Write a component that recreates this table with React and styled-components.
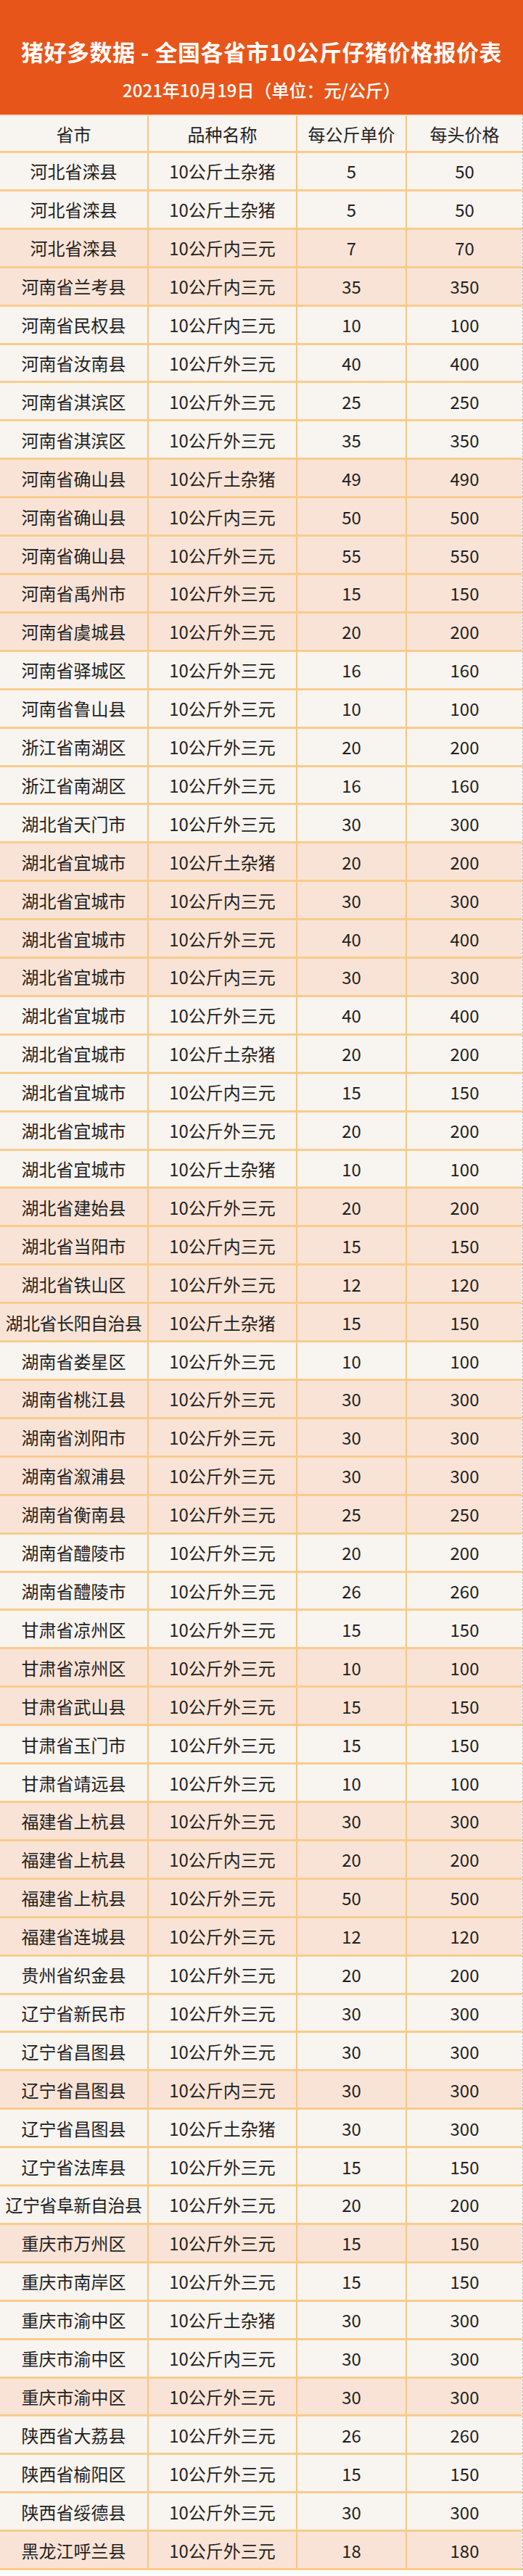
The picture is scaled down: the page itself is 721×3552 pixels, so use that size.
import React from 'react';
import styled, { createGlobalStyle } from 'styled-components';

const GlobalStyle = createGlobalStyle`
  html, body {
    margin: 0;
    padding: 0;
    background: #ffffff;
  }
  body {
    font-family: "Noto Sans CJK SC", "Noto Sans", sans-serif;
  }
`;

const Page = styled.div`
  width: 721px;
  padding-bottom: 7px;
`;

const Banner = styled.header`
  height: 158px;
  box-sizing: border-box;
  background-color: #e8551a;
  color: #ffffff;
  display: flex;
  flex-direction: column;
  align-items: center;
  padding-top: 51px;
  gap: 17px;
`;

const Title = styled.h1`
  margin: 0;
  font-size: 31px;
  line-height: 40px;
  font-weight: 700;
  letter-spacing: 0.5px;
  white-space: nowrap;
`;

const SubTitle = styled.div`
  font-size: 24px;
  line-height: 31px;
  font-weight: 500;
  white-space: nowrap;
`;

const Table = styled.div`
  border-right: 1px dashed #b9b4ae;
  border-top: 2px solid #f7dcc4;
`;

const Row = styled.div`
  display: grid;
  grid-template-columns: 205px 205px 151px 1fr;
  height: ${p => (p.$head ? '51px' : '52.92px')};
  box-sizing: border-box;
  border-bottom: 3px solid #f9cc8c;
  background-color: ${p => (p.$pink ? '#f9e3d6' : '#f8f4f0')};
`;

const Cell = styled.div`
  display: flex;
  align-items: center;
  justify-content: center;
  border-right: ${p => (p.$last ? 'none' : '2px solid #f6c683')};
  font-size: 24px;
  color: #1f1f1f;
  white-space: nowrap;
  letter-spacing: ${p => (p.$tight ? '-0.5px' : '0')};
`;

const rows = [
  ['河北省滦县', '10公斤土杂猪', 5, 0],
  ['河北省滦县', '10公斤土杂猪', 5, 0],
  ['河北省滦县', '10公斤内三元', 7, 1],
  ['河南省兰考县', '10公斤内三元', 35, 1],
  ['河南省民权县', '10公斤内三元', 10, 0],
  ['河南省汝南县', '10公斤外三元', 40, 0],
  ['河南省淇滨区', '10公斤外三元', 25, 0],
  ['河南省淇滨区', '10公斤外三元', 35, 0],
  ['河南省确山县', '10公斤土杂猪', 49, 1],
  ['河南省确山县', '10公斤内三元', 50, 1],
  ['河南省确山县', '10公斤外三元', 55, 1],
  ['河南省禹州市', '10公斤外三元', 15, 1],
  ['河南省虞城县', '10公斤外三元', 20, 1],
  ['河南省驿城区', '10公斤外三元', 16, 0],
  ['河南省鲁山县', '10公斤外三元', 10, 0],
  ['浙江省南湖区', '10公斤外三元', 20, 0],
  ['浙江省南湖区', '10公斤外三元', 16, 0],
  ['湖北省天门市', '10公斤外三元', 30, 0],
  ['湖北省宜城市', '10公斤土杂猪', 20, 1],
  ['湖北省宜城市', '10公斤内三元', 30, 1],
  ['湖北省宜城市', '10公斤外三元', 40, 1],
  ['湖北省宜城市', '10公斤内三元', 30, 1],
  ['湖北省宜城市', '10公斤外三元', 40, 0],
  ['湖北省宜城市', '10公斤土杂猪', 20, 0],
  ['湖北省宜城市', '10公斤内三元', 15, 0],
  ['湖北省宜城市', '10公斤外三元', 20, 0],
  ['湖北省宜城市', '10公斤土杂猪', 10, 0],
  ['湖北省建始县', '10公斤外三元', 20, 1],
  ['湖北省当阳市', '10公斤内三元', 15, 1],
  ['湖北省铁山区', '10公斤外三元', 12, 1],
  ['湖北省长阳自治县', '10公斤土杂猪', 15, 1],
  ['湖南省娄星区', '10公斤外三元', 10, 0],
  ['湖南省桃江县', '10公斤外三元', 30, 1],
  ['湖南省浏阳市', '10公斤外三元', 30, 1],
  ['湖南省溆浦县', '10公斤外三元', 30, 1],
  ['湖南省衡南县', '10公斤外三元', 25, 1],
  ['湖南省醴陵市', '10公斤外三元', 20, 0],
  ['湖南省醴陵市', '10公斤外三元', 26, 0],
  ['甘肃省凉州区', '10公斤外三元', 15, 0],
  ['甘肃省凉州区', '10公斤外三元', 10, 1],
  ['甘肃省武山县', '10公斤外三元', 15, 1],
  ['甘肃省玉门市', '10公斤外三元', 15, 0],
  ['甘肃省靖远县', '10公斤外三元', 10, 0],
  ['福建省上杭县', '10公斤外三元', 30, 1],
  ['福建省上杭县', '10公斤内三元', 20, 1],
  ['福建省上杭县', '10公斤外三元', 50, 1],
  ['福建省连城县', '10公斤外三元', 12, 1],
  ['贵州省织金县', '10公斤外三元', 20, 0],
  ['辽宁省新民市', '10公斤外三元', 30, 0],
  ['辽宁省昌图县', '10公斤外三元', 30, 0],
  ['辽宁省昌图县', '10公斤内三元', 30, 1],
  ['辽宁省昌图县', '10公斤土杂猪', 30, 0],
  ['辽宁省法库县', '10公斤外三元', 15, 0],
  ['辽宁省阜新自治县', '10公斤外三元', 20, 0],
  ['重庆市万州区', '10公斤外三元', 15, 1],
  ['重庆市南岸区', '10公斤外三元', 15, 0],
  ['重庆市渝中区', '10公斤土杂猪', 30, 0],
  ['重庆市渝中区', '10公斤内三元', 30, 0],
  ['重庆市渝中区', '10公斤外三元', 30, 1],
  ['陕西省大荔县', '10公斤外三元', 26, 0],
  ['陕西省榆阳区', '10公斤外三元', 15, 0],
  ['陕西省绥德县', '10公斤外三元', 30, 0],
  ['黑龙江呼兰县', '10公斤外三元', 18, 1],
];

const App = () => {
  return (
    <Page>
      <GlobalStyle />
      <Banner>
        <Title>猪好多数据 - 全国各省市10公斤仔猪价格报价表</Title>
        <SubTitle>2021年10月19日（单位：元/公斤）</SubTitle>
      </Banner>
      <Table>
        <Row $head>
          <Cell>省市</Cell>
          <Cell>品种名称</Cell>
          <Cell>每公斤单价</Cell>
          <Cell $last>每头价格</Cell>
        </Row>
        {rows.map(([place, breed, price, pink], i) => (
          <Row key={i} $pink={!!pink}>
            <Cell $tight={place.length > 7}>{place}</Cell>
            <Cell>{breed}</Cell>
            <Cell>{price}</Cell>
            <Cell $last>{price * 10}</Cell>
          </Row>
        ))}
      </Table>
    </Page>
  );
};

export default App;
